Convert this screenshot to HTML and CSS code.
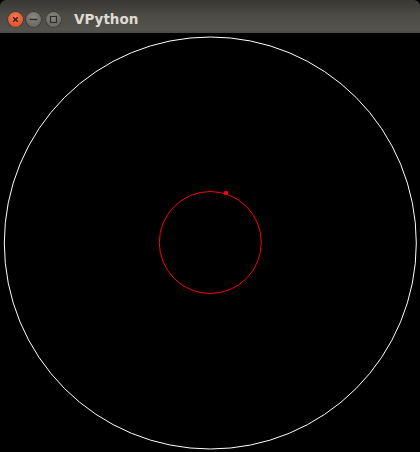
FILE: index.html
```html
<!DOCTYPE html>
<html>
<head>
<meta charset="utf-8">
<link rel="stylesheet" href="styles.css">
</head>
<body>
<div class="window">
  <div class="titlebar">
    <div class="controls">
      <span class="btn close"><svg width="15" height="15" viewBox="0 0 15 15"><path d="M5.2 5.2L9.8 9.8M9.8 5.2L5.2 9.8" stroke="#3a1a10" stroke-width="1.4"/></svg></span>
      <span class="btn"><svg width="15" height="15" viewBox="0 0 15 15"><path d="M3.8 7.5H11.2" stroke="#2f2e2a" stroke-width="1.4"/></svg></span>
      <span class="btn max"><svg width="15" height="15" viewBox="0 0 15 15"><rect x="4.5" y="4.5" width="6" height="6" fill="none" stroke="#2f2e2a" stroke-width="1.2"/></svg></span>
    </div>
    <span class="title">VPython</span>
  </div>
  <svg class="scene" width="420" height="419" viewBox="0 0 420 419">
    <circle cx="210.3" cy="210" r="206" fill="none" stroke="#ffffff" stroke-width="1"/>
    <circle cx="210.3" cy="209.5" r="51" fill="none" stroke="#ff0000" stroke-width="1"/>
    <circle cx="226" cy="160" r="2.2" fill="#ff0000"/>
  </svg>
</div>
</body>
</html>
```

FILE: styles.css
```css
html, body {
  margin: 0;
  padding: 0;
  background: #000;
}
.window {
  width: 420px;
  height: 452px;
  background: #000;
  overflow: hidden;
}
.titlebar {
  height: 33px;
  box-sizing: border-box;
  display: flex;
  align-items: center;
  padding: 5px 0 0 8px;
  background: linear-gradient(#3a3935 0px, #3f3e3a 6px, #4b4a45 14px, #55534e 30px, #4a4944 33px);
  border-radius: 6px 6px 0 0;
}
.controls {
  display: flex;
  gap: 3px;
}
.btn {
  width: 15px;
  height: 15px;
  border-radius: 50%;
  background: radial-gradient(circle at 50% 35%, #8b8982, #5f5d57);
  box-shadow: 0 0 0 0.5px #2e2d29;
  display: block;
}
.btn svg { display: block; }
.btn.close {
  background: radial-gradient(circle at 50% 35%, #f27a52, #d9481e);
}
.btn.max { margin-left: 2px; }
.title {
  margin-left: 13px;
  font-family: "DejaVu Sans", sans-serif;
  font-weight: bold;
  font-size: 13.5px;
  color: #dfdbd2;
}
.scene {
  display: block;
}
```
